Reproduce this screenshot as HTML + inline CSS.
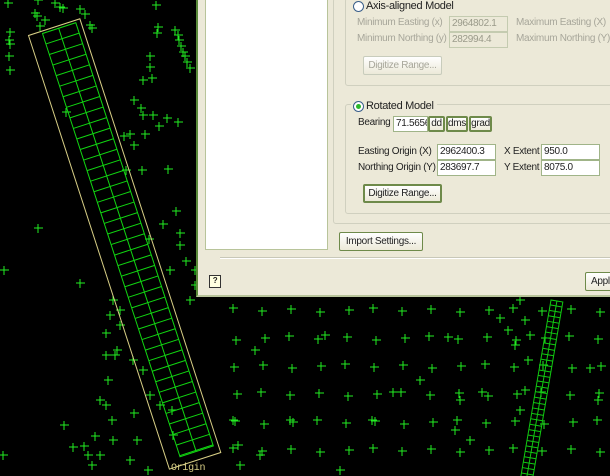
<!DOCTYPE html>
<html><head><meta charset="utf-8">
<style>
body{margin:0;width:610px;height:476px;overflow:hidden;background:#000;position:relative;font-family:"Liberation Sans",sans-serif;font-size:10px;letter-spacing:-0.3px}
svg{position:absolute;left:0;top:0}
#dlg{position:absolute;left:196px;top:-2px;width:420px;height:299px;background:#ece9d8;border-left:2px solid #5a8a3a;border-bottom:2px solid #b8c49a;box-sizing:border-box;color:#222}
.a{position:absolute;white-space:nowrap}
.inp{position:absolute;background:#fff;border:1px solid #a0b488;box-sizing:border-box;padding:0 2px;line-height:14px;white-space:nowrap;overflow:hidden}
.dis{background:#ece9d8;color:#9a9a8a;border-color:#c4cbb0}
.btn{position:absolute;border:1px solid #6e8a4a;border-radius:2px;background:linear-gradient(#fff,#ece9d8);text-align:center;box-sizing:border-box;white-space:nowrap;overflow:hidden}
.g{color:#a7a69a}
.radio{position:absolute;width:11px;height:11px;border-radius:50%;border:1px solid #3a5f8a;background:#fff;box-sizing:border-box;z-index:2}
</style></head><body>
<svg id="s" width="610" height="476"></svg>
<div id="dlg">
 <div class="a" style="left:7px;top:0;width:123px;height:252px;background:#fff;border:1px solid #b8c49a;box-sizing:border-box"></div>
 <div class="a" style="left:135px;top:0;width:300px;height:224px;border:1px solid #d0d0bf;border-radius:3px"></div>
 <div class="a" style="left:147px;top:0;width:300px;height:86px;border:1px solid #d0d0bf;border-radius:3px"></div>
 <div class="radio" style="left:155px;top:3px"></div>
 <div class="a" style="left:153px;top:2px;background:#ece9d8;padding:0 3px 0 15px;font-size:11px">Axis-aligned Model</div>
 <div class="a g" style="left:159px;top:19px">Minimum Easting (x)</div>
 <div class="a g" style="left:159px;top:35px">Minimum Northing (y)</div>
 <div class="inp dis" style="left:251px;top:18px;width:59px;height:16px">2964802.1</div>
 <div class="inp dis" style="left:251px;top:34px;width:59px;height:16px">282994.4</div>
 <div class="a g" style="left:318px;top:19px">Maximum Easting (X)</div>
 <div class="a g" style="left:318px;top:35px">Maximum Northing (Y)</div>
 <div class="inp dis" style="left:412px;top:18px;width:20px;height:16px"></div>
 <div class="inp dis" style="left:412px;top:34px;width:20px;height:16px"></div>
 <div class="btn" style="left:165px;top:58px;width:79px;height:19px;border-color:#c8ccbc;color:#a7a69a;line-height:17px">Digitize Range...</div>
 <div class="a" style="left:147px;top:106px;width:300px;height:108px;border:1px solid #d0d0bf;border-radius:3px"></div>
 <div class="radio" style="left:155px;top:103px"><div style="position:absolute;left:2px;top:2px;width:5px;height:5px;border-radius:50%;background:#2bb82b"></div></div>
 <div class="a" style="left:153px;top:102px;background:#ece9d8;padding:0 3px 0 15px;font-size:11px">Rotated Model</div>
 <div class="a" style="left:160px;top:119px">Bearing</div>
 <div class="inp" style="left:195px;top:118px;width:35px;height:16px">71.5656</div>
 <div class="btn" style="left:230px;top:118px;width:17px;height:16px;line-height:12px;border-width:2px">dd</div>
 <div class="btn" style="left:248px;top:118px;width:22px;height:16px;line-height:12px;border-width:2px">dms</div>
 <div class="btn" style="left:271px;top:118px;width:23px;height:16px;line-height:12px;border-width:2px">grad</div>
 <div class="a" style="left:160px;top:148px">Easting Origin (X)</div>
 <div class="a" style="left:160px;top:164px">Northing Origin (Y)</div>
 <div class="inp" style="left:239px;top:146px;width:59px;height:16px">2962400.3</div>
 <div class="inp" style="left:239px;top:162px;width:59px;height:16px">283697.7</div>
 <div class="a" style="left:306px;top:148px">X Extent</div>
 <div class="a" style="left:306px;top:164px">Y Extent</div>
 <div class="inp" style="left:343px;top:146px;width:59px;height:16px">950.0</div>
 <div class="inp" style="left:343px;top:162px;width:59px;height:16px">8075.0</div>
 <div class="btn" style="left:165px;top:186px;width:79px;height:19px;line-height:15px;border-width:2px">Digitize Range...</div>
 <div class="btn" style="left:141px;top:234px;width:84px;height:19px;line-height:17px">Import Settings...</div>
 <div class="a" style="left:22px;top:259px;width:400px;height:1px;background:#c8c8b8;border-bottom:1px solid #fff"></div>
 <div class="a" style="left:11px;top:277px;width:10px;height:11px;border:1px solid #333;background:#ffffe0;font-size:8px;line-height:10px;text-align:center;font-weight:bold">?</div>
 <div class="btn" style="left:387px;top:274px;width:40px;height:19px;line-height:17px;text-align:left;padding-left:5px">Apply</div>
</div>
<script>
var s='';
function c(x,y){s+='<path d="M'+(x-4)+' '+y+'h9M'+x+' '+(y-4)+'v9"/>';}
for(var x=235;x<610;x+=28)for(var y=310;y<476;y+=28)c(x+((x*7+y)%5-2),y+((x+y*3)%5-2));
var pts=[[8,3],[38,0],[55,3],[60,7],[63,8],[35,13],[37,16],[40,26],[45,20],[80,9],[85,14],[90,25],[92,28],[10,32],[9,40],[10,44],[9,56],[10,70],[156,5],[158,27],[157,33],[175,30],[178,35],[179,40],[181,46],[183,52],[185,56],[187,62],[190,68],[150,56],[134,100],[141,108],[143,115],[153,115],[167,118],[145,134],[134,145],[142,170],[178,122],[159,126],[168,169],[150,67],[152,78],[143,80],[66,112],[124,136],[130,134],[126,170],[176,211],[149,239],[163,224],[180,233],[180,245],[186,261],[170,270],[190,300],[195,285],[195,270],[38,228],[80,283],[4,270],[113,300],[120,310],[110,315],[120,325],[106,333],[117,350],[106,355],[108,380],[115,355],[112,420],[106,405],[113,440],[134,413],[137,440],[130,460],[100,455],[88,455],[92,465],[64,425],[73,447],[84,446],[95,436],[100,400],[133,360],[143,370],[150,395],[160,405],[172,410],[173,435],[148,470],[3,455],[233,420],[238,445],[240,465],[260,455],[290,420],[255,350],[325,335],[340,470],[372,420],[393,392],[420,380],[455,430],[482,392],[520,300],[525,320],[530,335],[528,360],[525,390],[520,410],[500,318],[508,330],[515,345],[590,368],[598,400],[448,337],[460,400],[470,440]];
pts.forEach(function(p){c(p[0],p[1]);});
var g='<g stroke="#22ee22" stroke-width="1" fill="none">'+s+'</g>';
g+='<g transform="translate(28.5,35.5) rotate(-18)"><rect width="54" height="456" fill="none" stroke="#d8cf86" stroke-width="1"/></g>';
var gr='<g transform="translate(42.5,33.5) rotate(-18)" stroke="#11d611" fill="none"><rect width="35" height="445"/><path d="M17 0v445';
for(var y=11;y<445;y+=11.1)gr+='M0 '+y.toFixed(1)+'h35';
gr+='"/></g>';
var gr2='<g transform="translate(551,300) rotate(9.7)" stroke="#11c811" fill="none"><rect width="12" height="180"/><path d="M6 0v180';
for(var y=5;y<180;y+=5.5)gr2+='M0 '+y.toFixed(1)+'h12';
gr2+='"/></g>';
g+=gr+gr2+'<text x="171" y="470" fill="#d8cf86" font-family="Liberation Mono,monospace" font-size="10">Origin</text>';
document.getElementById('s').innerHTML=g;
</script>
</body></html>
